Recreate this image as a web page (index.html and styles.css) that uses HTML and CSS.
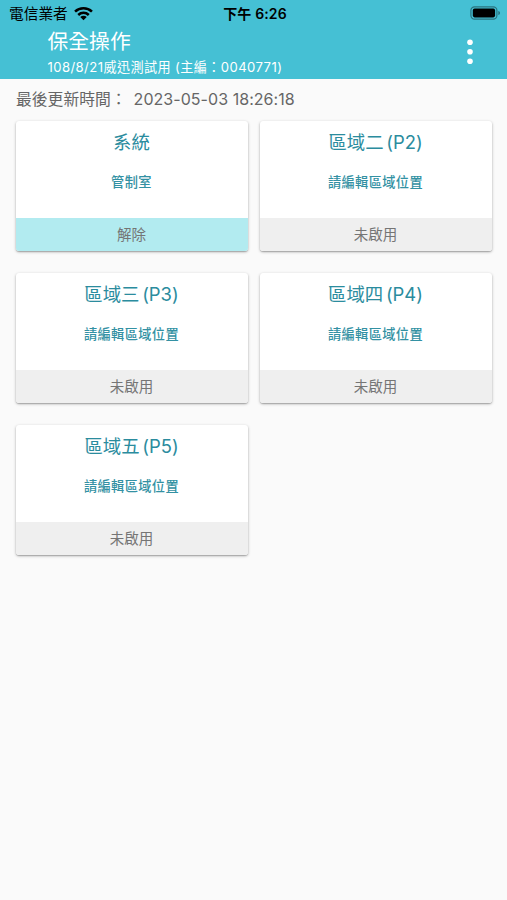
FILE: index.html
```html
<!DOCTYPE html>
<html lang="zh-Hant">
 <head>
  <meta charset="UTF-8">
  <meta name="viewport" content="width=device-width, initial-scale=1.0">
  <title>保全操作</title>
  <link rel="stylesheet" href="styles.css">
 </head>
 <body>
  <header>
	<div class="status-bar">
		<div class="carrier">
			<span>電信業者</span>
			<svg class="wifi" viewBox="0 0 18 14" width="19" height="15">
				<g fill="none" stroke="#000" stroke-width="2.4">
					<path d="M1 5.2C5.4 .9 12.6 .9 17 5.2"/>
					<path d="M4 8.4C6.9 5.7 11.1 5.7 14 8.4"/>
				</g>
				<path d="M9 13.4L5.9 10.3C7.7 8.8 10.3 8.8 12.1 10.3Z"/>
			</svg>
		</div>
		<div class="clock">下午 6:26</div>
		<svg class="battery" viewBox="0 0 31 14" width="31" height="14">
			<rect x=".9" y=".8" width="26" height="12.4" rx="3.6" fill="none" stroke="#000" stroke-opacity=".4" stroke-width="1.2"/>
			<rect x="2.8" y="2.6" width="22.3" height="8.8" rx="1.8"/>
			<path d="M28.4 5C30.4 5.6 30.4 8.4 28.4 9Z" fill-opacity=".45"/>
		</svg>
	</div>
	<div class="toolbar">
		<div>
			<h1>保全操作</h1>
			<p class="account">108/8/21威迅測試用 (主編：0040771)</p>
		</div>
		<svg class="more" viewBox="0 0 6 26" width="6" height="26" fill="#fff">
			<circle cx="3" cy="3.3" r="2.8"/>
			<circle cx="3" cy="12.8" r="2.8"/>
			<circle cx="3" cy="22.3" r="2.8"/>
		</svg>
	</div>
  </header>
  <p class="updated"><span>最後更新時間：</span><span class="time">2023-05-03 18:26:18</span></p>
  <main class="zones">
	<section class="card">
		<h2>系統</h2>
		<p class="place">管制室</p>
		<div class="state disarmed">解除</div>
	</section>
	<section class="card">
		<h2>區域二 (P2)</h2>
		<p class="place">請編輯區域位置</p>
		<div class="state">未啟用</div>
	</section>
	<section class="card">
		<h2>區域三 (P3)</h2>
		<p class="place">請編輯區域位置</p>
		<div class="state">未啟用</div>
	</section>
	<section class="card">
		<h2>區域四 (P4)</h2>
		<p class="place">請編輯區域位置</p>
		<div class="state">未啟用</div>
	</section>
	<section class="card">
		<h2>區域五 (P5)</h2>
		<p class="place">請編輯區域位置</p>
		<div class="state">未啟用</div>
	</section>
  </main>
 </body>
</html>
```
FILE: styles.css
```css
body{
	margin:0;
	min-height:900px;
	background:#FAFAFA;
	font-family:Inter, "Noto Sans CJK TC", sans-serif;
}
h1, h2, p{
	margin:0;
	font-weight:400;
	white-space:nowrap;
}

header{
	height:79px;
	background:#45C0D4;
}
.status-bar{
	display:grid;
	grid-template-columns:1fr auto 1fr;
	align-items:center;
	height:27px;
	padding:0 6px 0 9px;
	color:#000;
	font-size:14px;
	line-height:27px;
}
.carrier{
	display:flex;
	align-items:center;
	gap:6px;
	padding-top:1px;
	font-size:14.7px;
}
.wifi{
	margin-top:-3px;
}
.clock{
	margin-top:-1px;
	font-weight:600;
	letter-spacing:.15px;
}
.battery{
	justify-self:end;
	margin-top:-2px;
}
.toolbar{
	display:flex;
	justify-content:space-between;
	padding:0 34px 0 47.5px;
	color:#FFFFFF;
}
h1{
	padding-top:1px;
	font-size:20.8px;
	line-height:28px;
}
.account{
	margin-top:1px;
	font-size:13.1px;
	line-height:20px;
	letter-spacing:.42px;
}
.more{
	margin-top:12px;
}

.updated{
	display:flex;
	gap:7px;
	padding:9px 16px 0;
	color:#666666;
	font-size:15.8px;
	line-height:24px;
}
.time{
	margin-top:-1px;
	font-size:16px;
	letter-spacing:.05px;
}

.zones{
	display:grid;
	grid-template-columns:232px 232px;
	gap:22px 12px;
	padding:9px 15.5px;
}
.card{
	display:flex;
	flex-direction:column;
	height:130px;
	border-radius:3px;
	overflow:hidden;
	background:#FFFFFF;
	box-shadow:0 1px 3px rgba(0,0,0,.3), 0 1px 1px rgba(0,0,0,.15);
	color:#2B8C9E;
	text-align:center;
}
h2{
	padding-top:7px;
	font-size:18.4px;
	line-height:28px;
	word-spacing:-2.5px;
}
.place{
	padding-top:15px;
	color:#3391A3;
	font-size:13.2px;
	font-weight:500;
	line-height:22px;
	letter-spacing:.4px;
}
.state{
	height:33px;
	margin-top:auto;
	background:#EFEFEF;
	color:#757575;
	font-size:14.5px;
	line-height:33px;
}
.disarmed{
	background:#B2EBF0;
}
```
